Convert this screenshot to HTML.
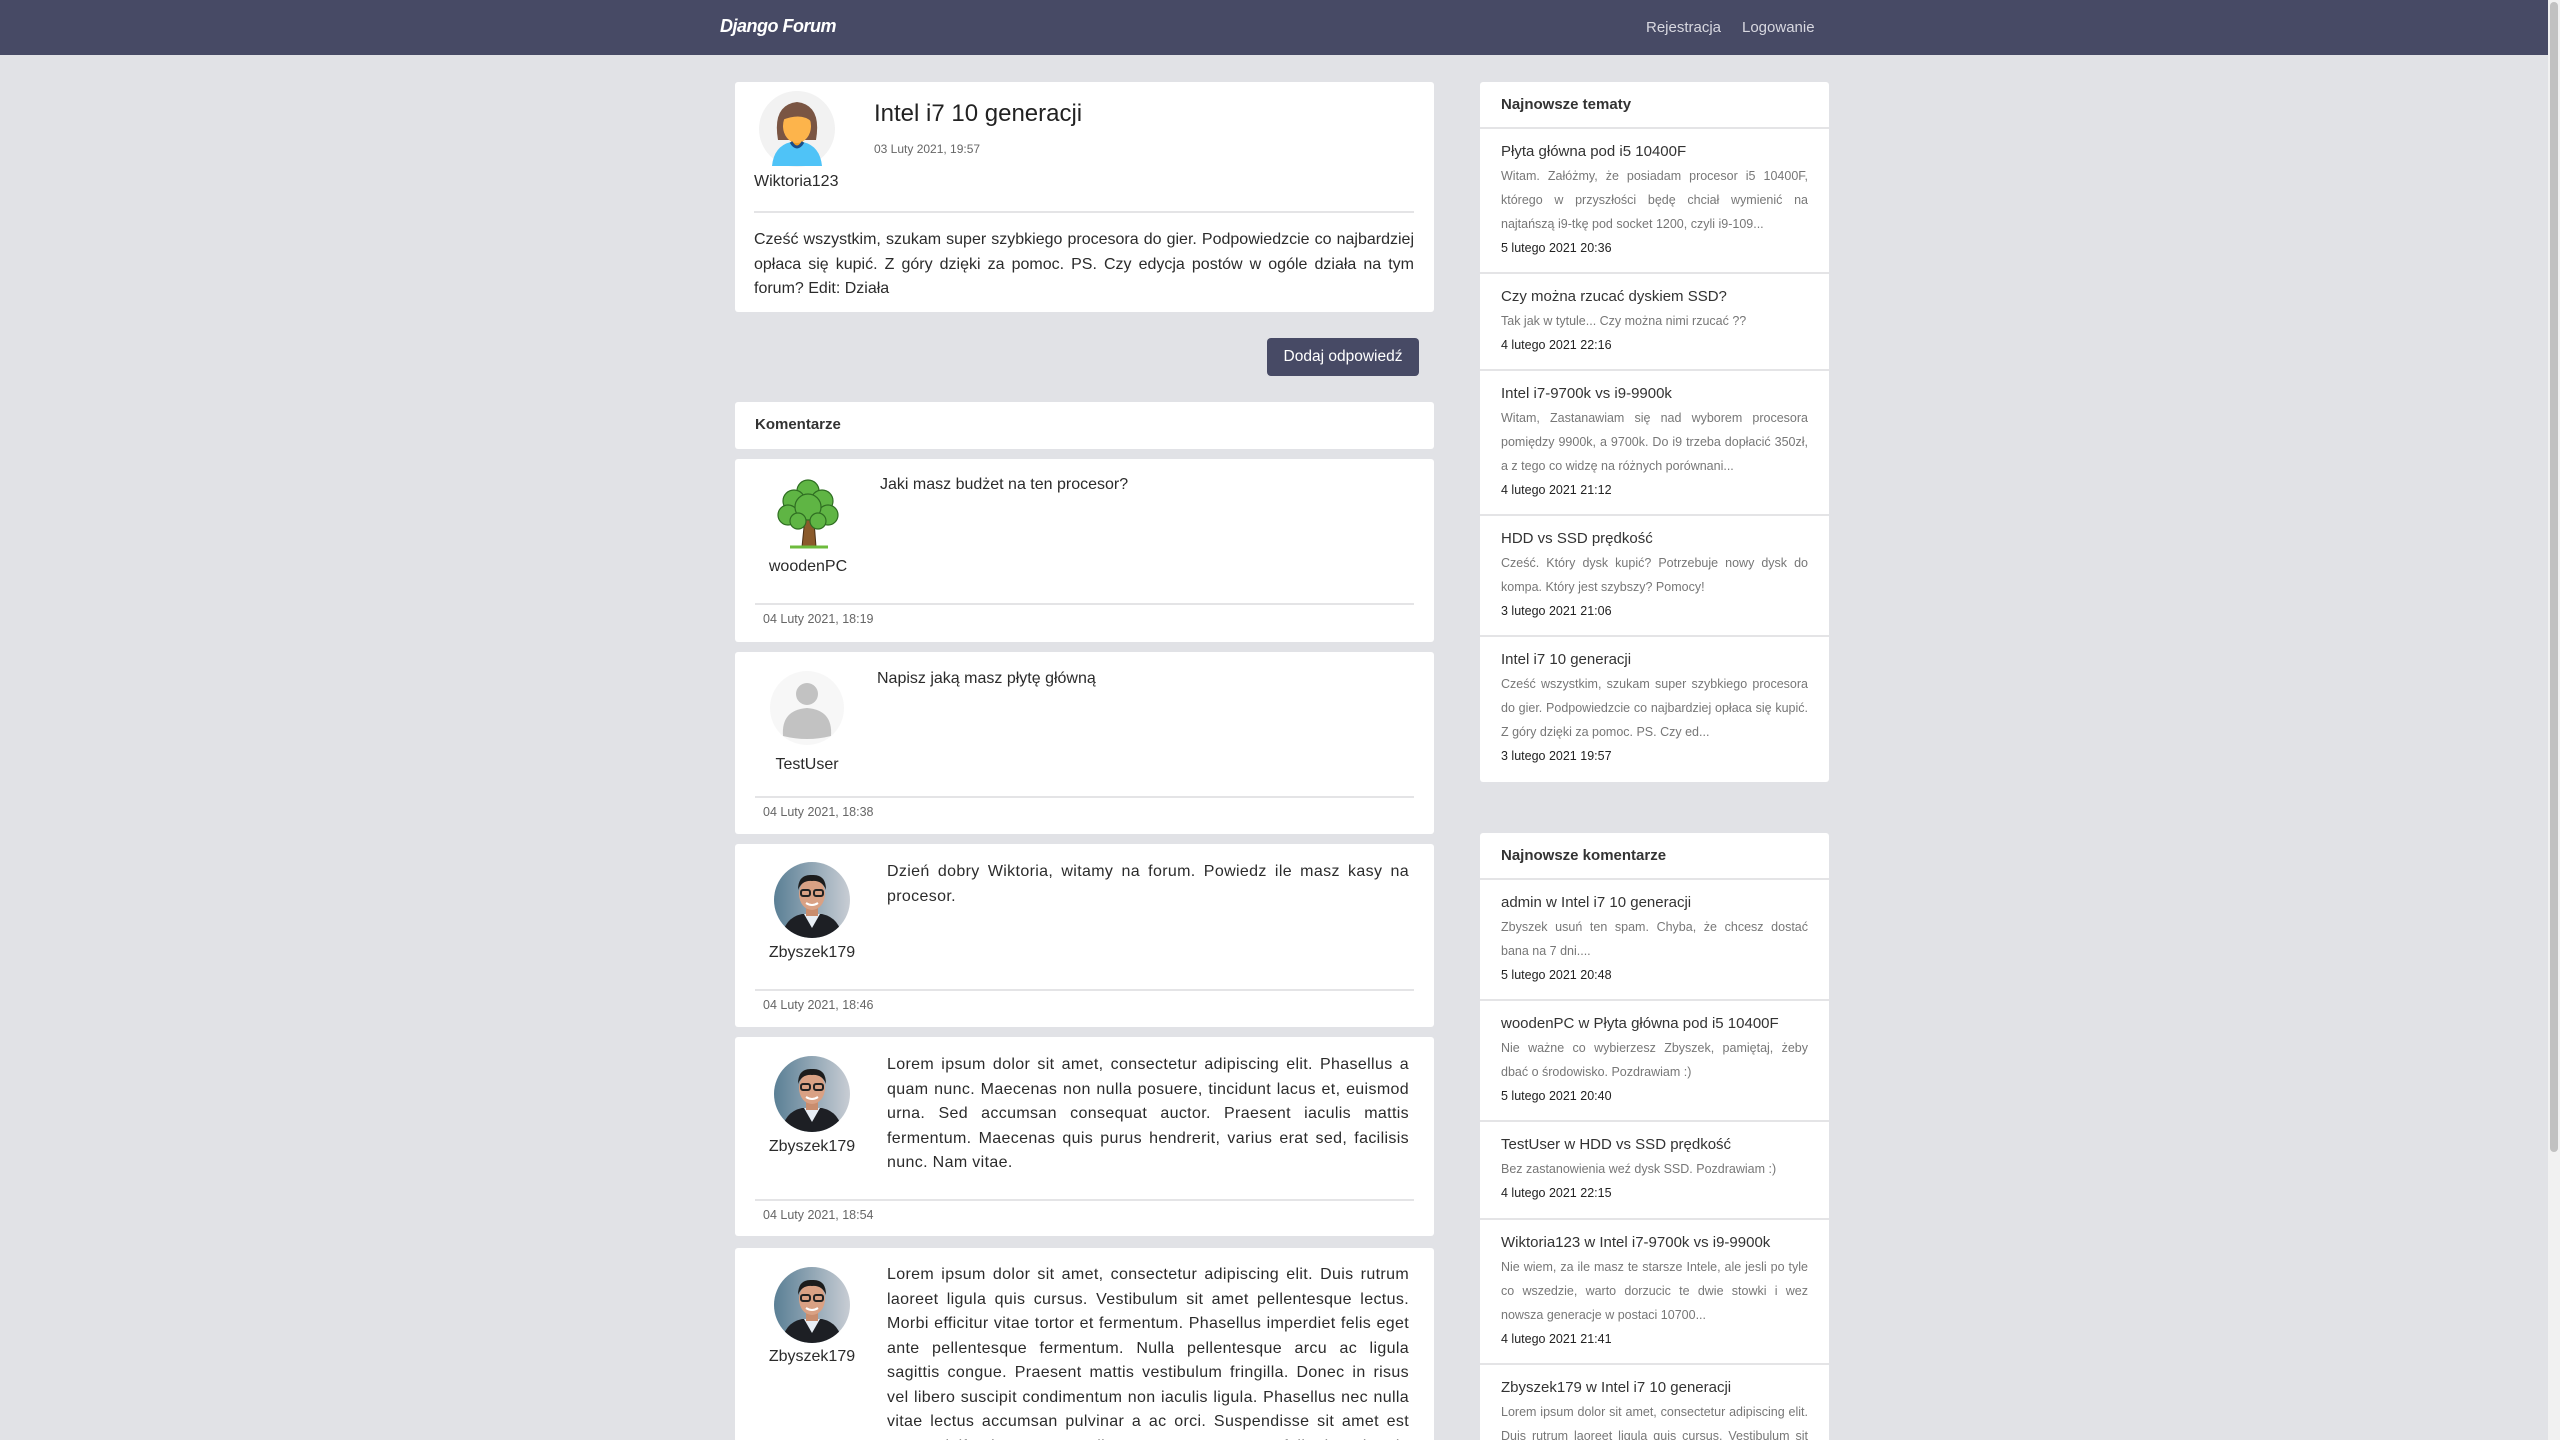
<!DOCTYPE html>
<html><head><meta charset="utf-8">
<style>
*{box-sizing:border-box;margin:0;padding:0}
html,body{width:2560px;height:1440px;overflow:hidden}
body{background:#e1e2e6;font-family:"Liberation Sans",sans-serif;color:#2b2b2b;position:relative}
.nav{position:absolute;left:0;top:0;width:2548px;height:55px;background:#474a65}
.brand{position:absolute;left:720px;top:16px;color:#fff;font-size:18px;font-style:italic;font-weight:bold;letter-spacing:-0.5px}
.nl{position:absolute;top:19px;color:#d8d8e0;font-size:15px}
.card{position:absolute;background:#fff;border-radius:3px}
.abs{position:absolute}
.j{text-align:justify}
.body16{font-size:16px;line-height:24.5px}
.cm{letter-spacing:0.35px}
.hr{position:absolute;height:2px;background:#e4e4e6}
.date{position:absolute;font-size:12.5px;color:#666}
.name{position:absolute;font-size:16px;text-align:center;width:120px}
.side .h{height:47px;border-bottom:2px solid #e4e4e6;padding:14px 20px 0 21px;font-size:15px;font-weight:bold;color:#333}
.it{border-bottom:2px solid #e4e4e6;padding:13px 21px 0 21px}
.it .t{font-size:15px;line-height:20px;color:#333}
.it .s{font-size:12.5px;line-height:24px;color:#777;text-align:justify;margin-top:2px}
.it .d{font-size:12.5px;line-height:24px;color:#222}
.sb{position:absolute;left:2548px;top:0;width:12px;height:1440px;background:#f1f1f1}
.th{position:absolute;left:2550px;top:2px;width:8px;height:1150px;background:#c1c1c1;border-radius:4px}
</style></head><body>
<div class="nav">
<div class="brand">Django Forum</div>
<div class="nl" style="left:1646px">Rejestracja</div>
<div class="nl" style="left:1742px">Logowanie</div>
</div>
<div class="sb"></div><div class="th"></div>

<!-- post -->
<div class="card" style="left:735px;top:82px;width:699px;height:230px">
<svg class="abs" style="left:23px;top:8px" width="78" height="78" viewBox="0 0 78 78">
<circle cx="39" cy="39" r="38" fill="#f2f2f2"/>
<path d="M20 50 Q14 15 39 12 Q64 15 58 50 Z" fill="#7a5543"/>
<rect x="33" y="46" width="12" height="10" fill="#f09a20"/>
<ellipse cx="39" cy="36" rx="14" ry="17" fill="#fdb44b"/>
<path d="M24 30 Q30 14 50 20 Q54 24 54 32 Q44 22 24 30Z" fill="#7a5543"/>
<path d="M14 76 Q16 56 33 52 Q39 60 45 52 Q62 56 64 76 Z" fill="#4fc3f7"/>
<path d="M33 52 Q39 62 45 52" fill="none" stroke="#1a4e8a" stroke-width="3"/>
</svg>
<div class="abs" style="left:19px;top:91px;font-size:16px">Wiktoria123</div>
<div class="abs" style="left:139px;top:18px;font-size:24px;color:#222">Intel i7 10 generacji</div>
<div class="abs" style="left:139px;top:60px;font-size:12px;color:#666">03 Luty 2021, 19:57</div>
<div class="hr" style="left:19px;top:129px;width:660px"></div>
<div class="abs j body16" style="left:19px;top:146px;width:660px">Cześć wszystkim, szukam super szybkiego procesora do gier. Podpowiedzcie co najbardziej opłaca się kupić. Z góry dzięki za pomoc. PS. Czy edycja postów w ogóle działa na tym forum? Edit: Działa</div>
</div>

<div class="abs" style="left:1267px;top:338px;width:152px;height:38px;background:#474a65;border-radius:4px;color:#fff;font-size:15.5px;text-align:center;line-height:38px">Dodaj odpowiedź</div>

<div class="card" style="left:735px;top:402px;width:699px;height:47px">
<div class="abs" style="left:20px;top:14px;font-size:15px;font-weight:bold;color:#333">Komentarze</div>
</div>

<!-- comment 1 -->
<div class="card" style="left:735px;top:459px;width:699px;height:183px">
<svg class="abs" style="left:37px;top:18px" width="72" height="76" viewBox="0 0 72 76">
<path d="M30 70 L33 40 L28 30 L34 34 L38 28 L40 38 L46 32 L42 44 L44 70 Z" fill="#8b5a2b" stroke="#4a2e14" stroke-width="1"/>
<path d="M18 70 L56 70" stroke="#6dbb3c" stroke-width="3"/>
<g fill="#5fb544" stroke="#2f6e22" stroke-width="1.2">
<circle cx="36" cy="14" r="11"/><circle cx="22" cy="24" r="11"/><circle cx="50" cy="24" r="11"/>
<circle cx="16" cy="38" r="10"/><circle cx="56" cy="38" r="10"/><circle cx="36" cy="30" r="13"/>
<circle cx="26" cy="44" r="8"/><circle cx="46" cy="44" r="8"/></g>
</svg>
<div class="name" style="left:13px;top:99px">woodenPC</div>
<div class="abs body16" style="left:145px;top:14px">Jaki masz budżet na ten procesor?</div>
<div class="hr" style="left:20px;top:144px;width:659px"></div>
<div class="date" style="left:28px;top:153px">04 Luty 2021, 18:19</div>
</div>

<!-- comment 2 -->
<div class="card" style="left:735px;top:652px;width:699px;height:182px">
<svg class="abs" style="left:34px;top:18px" width="76" height="76" viewBox="0 0 76 76">
<circle cx="38" cy="38" r="37" fill="#f7f7f7"/>
<circle cx="38" cy="24" r="11" fill="#c2c2c2"/>
<path d="M14 66 Q12 40 38 38 Q64 40 62 66 Q38 72 14 66Z" fill="#c2c2c2"/>
</svg>
<div class="name" style="left:12px;top:104px">TestUser</div>
<div class="abs body16" style="left:142px;top:15px">Napisz jaką masz płytę główną</div>
<div class="hr" style="left:20px;top:144px;width:659px"></div>
<div class="date" style="left:28px;top:153px">04 Luty 2021, 18:38</div>
</div>

<svg width="0" height="0" style="position:absolute"><defs>
<linearGradient id="bg" x1="0" x2="1"><stop offset="0" stop-color="#5a7f95"/><stop offset="1" stop-color="#c8cdd4"/></linearGradient>
<clipPath id="cc"><circle cx="38" cy="38" r="38"/></clipPath>
<g id="man" clip-path="url(#cc)">
<rect width="76" height="76" fill="url(#bg)"/>
<path d="M8 76 Q10 56 28 52 L48 52 Q66 56 68 76Z" fill="#1d1f24"/>
<path d="M30 52 L38 66 L46 52Z" fill="#e8eef5"/>
<rect x="32" y="42" width="12" height="12" fill="#c98d6e"/>
<ellipse cx="38" cy="32" rx="13" ry="16" fill="#d9a184"/>
<path d="M24 28 Q24 12 38 13 Q52 12 52 28 Q48 18 38 19 Q28 18 24 28Z" fill="#1c1c1c"/>
<g fill="none" stroke="#222" stroke-width="2"><rect x="27" y="28" width="9" height="6" rx="2"/><rect x="40" y="28" width="9" height="6" rx="2"/></g>
<path d="M32 41 Q38 45 44 41" stroke="#fff" stroke-width="2" fill="none"/>
</g></defs></svg>

<!-- comment 3 -->
<div class="card" style="left:735px;top:844px;width:699px;height:183px">
<svg class="abs" style="left:39px;top:18px" width="76" height="76"><use href="#man"/></svg>
<div class="name" style="left:17px;top:100px">Zbyszek179</div>
<div class="abs j body16 cm" style="left:152px;top:16px;width:522px">Dzień dobry Wiktoria, witamy na forum. Powiedz ile masz kasy na procesor.</div>
<div class="hr" style="left:20px;top:145px;width:659px"></div>
<div class="date" style="left:28px;top:154px">04 Luty 2021, 18:46</div>
</div>

<!-- comment 4 -->
<div class="card" style="left:735px;top:1037px;width:699px;height:199px">
<svg class="abs" style="left:39px;top:19px" width="76" height="76"><use href="#man"/></svg>
<div class="name" style="left:17px;top:101px">Zbyszek179</div>
<div class="abs j body16 cm" style="left:152px;top:16px;width:522px">Lorem ipsum dolor sit amet, consectetur adipiscing elit. Phasellus a quam nunc. Maecenas non nulla posuere, tincidunt lacus et, euismod urna. Sed accumsan consequat auctor. Praesent iaculis mattis fermentum. Maecenas quis purus hendrerit, varius erat sed, facilisis nunc. Nam vitae.</div>
<div class="hr" style="left:20px;top:162px;width:659px"></div>
<div class="date" style="left:28px;top:171px">04 Luty 2021, 18:54</div>
</div>

<!-- comment 5 -->
<div class="card" style="left:735px;top:1248px;width:699px;height:220px">
<svg class="abs" style="left:39px;top:19px" width="76" height="76"><use href="#man"/></svg>
<div class="name" style="left:17px;top:100px">Zbyszek179</div>
<div class="abs j body16 cm" style="left:152px;top:15px;width:522px">Lorem ipsum dolor sit amet, consectetur adipiscing elit. Duis rutrum laoreet ligula quis cursus. Vestibulum sit amet pellentesque lectus. Morbi efficitur vitae tortor et fermentum. Phasellus imperdiet felis eget ante pellentesque fermentum. Nulla pellentesque arcu ac ligula sagittis congue. Praesent mattis vestibulum fringilla. Donec in risus vel libero suscipit condimentum non iaculis ligula. Phasellus nec nulla vitae lectus accumsan pulvinar a ac orci. Suspendisse sit amet est porta, eleifend accumsan tellus tempus. Cras quam felis, interdum in mollis id, tincidunt.</div>
</div>

<!-- sidebar 1 -->
<div class="card side" style="left:1480px;top:82px;width:349px;height:700px;overflow:hidden">
<div class="h">Najnowsze tematy</div>
<div class="it" style="height:145px"><div class="t">Płyta główna pod i5 10400F</div><div class="s">Witam. Załóżmy, że posiadam procesor i5 10400F, którego w przyszłości będę chciał wymienić na najtańszą i9-tkę pod socket 1200, czyli i9-109...</div><div class="d">5 lutego 2021 20:36</div></div>
<div class="it" style="height:97px"><div class="t">Czy można rzucać dyskiem SSD?</div><div class="s">Tak jak w tytule... Czy można nimi rzucać ??</div><div class="d">4 lutego 2021 22:16</div></div>
<div class="it" style="height:145px"><div class="t">Intel i7-9700k vs i9-9900k</div><div class="s">Witam, Zastanawiam się nad wyborem procesora pomiędzy 9900k, a 9700k. Do i9 trzeba dopłacić 350zł, a z tego co widzę na różnych porównani...</div><div class="d">4 lutego 2021 21:12</div></div>
<div class="it" style="height:121px"><div class="t">HDD vs SSD prędkość</div><div class="s">Cześć. Który dysk kupić? Potrzebuje nowy dysk do kompa. Który jest szybszy? Pomocy!</div><div class="d">3 lutego 2021 21:06</div></div>
<div class="it" style="height:145px;border:0"><div class="t">Intel i7 10 generacji</div><div class="s">Cześć wszystkim, szukam super szybkiego procesora do gier. Podpowiedzcie co najbardziej opłaca się kupić. Z góry dzięki za pomoc. PS. Czy ed...</div><div class="d">3 lutego 2021 19:57</div></div>
</div>

<!-- sidebar 2 -->
<div class="card side" style="left:1480px;top:833px;width:349px;height:640px;overflow:hidden">
<div class="h">Najnowsze komentarze</div>
<div class="it" style="height:121px"><div class="t">admin w Intel i7 10 generacji</div><div class="s">Zbyszek usuń ten spam. Chyba, że chcesz dostać bana na 7 dni....</div><div class="d">5 lutego 2021 20:48</div></div>
<div class="it" style="height:121px"><div class="t">woodenPC w Płyta główna pod i5 10400F</div><div class="s">Nie ważne co wybierzesz Zbyszek, pamiętaj, żeby dbać o środowisko. Pozdrawiam :)</div><div class="d">5 lutego 2021 20:40</div></div>
<div class="it" style="height:98px"><div class="t">TestUser w HDD vs SSD prędkość</div><div class="s">Bez zastanowienia weź dysk SSD. Pozdrawiam :)</div><div class="d">4 lutego 2021 22:15</div></div>
<div class="it" style="height:145px"><div class="t">Wiktoria123 w Intel i7-9700k vs i9-9900k</div><div class="s">Nie wiem, za ile masz te starsze Intele, ale jesli po tyle co wszedzie, warto dorzucic te dwie stowki i wez nowsza generacje w postaci 10700...</div><div class="d">4 lutego 2021 21:41</div></div>
<div class="it" style="height:145px;border:0"><div class="t">Zbyszek179 w Intel i7 10 generacji</div><div class="s">Lorem ipsum dolor sit amet, consectetur adipiscing elit. Duis rutrum laoreet ligula quis cursus. Vestibulum sit amet...</div><div class="d">4 lutego 2021 19:02</div></div>
</div>
</body></html>
